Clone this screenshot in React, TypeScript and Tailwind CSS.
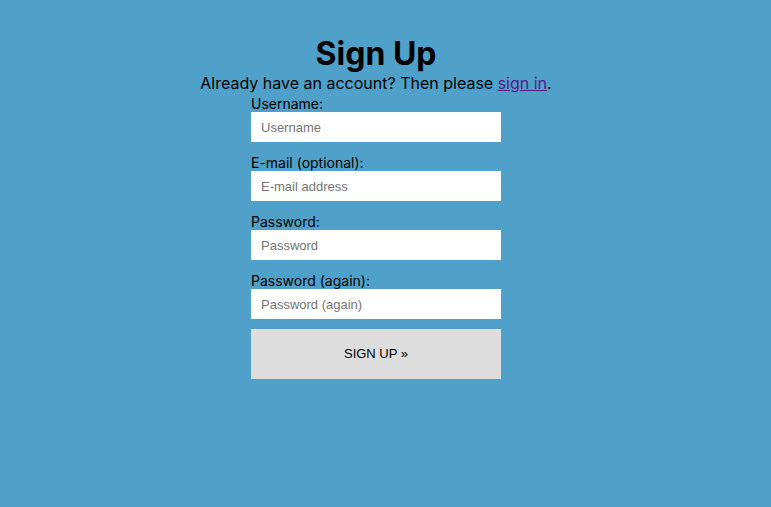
import React from 'react';

const fields = [
  { label: 'Username:', placeholder: 'Username', type: 'text' },
  { label: 'E-mail (optional):', placeholder: 'E-mail address', type: 'email' },
  { label: 'Password:', placeholder: 'Password', type: 'password' },
  { label: 'Password (again):', placeholder: 'Password (again)', type: 'password' },
];

export default function App() {
  return (
    <div className="min-h-[507px] w-full bg-[#4fa1ca] font-['Inter',sans-serif] text-black">
      <div className="w-[752px] pt-[35px]">
        <h1 className="text-center text-[32px] font-bold leading-[38px]">Sign Up</h1>
        <p className="mt-[1px] text-center text-base leading-[19px]">
          Already have an account? Then please{' '}
          <a href="#" className="text-[#551a8b] underline">sign in</a>.
        </p>
        <form className="mx-auto mt-[2px] flex w-[250px] flex-col" onSubmit={e => e.preventDefault()}>
          {fields.map((f, i) => (
            <label key={f.label} className={`flex flex-col ${i > 0 ? 'mt-3' : ''}`}>
              <span className="text-sm leading-[17px]">{f.label}</span>
              <input
                type={f.type}
                placeholder={f.placeholder}
                className="h-[30px] w-full bg-white pl-[10px] font-['Liberation_Sans',Arial,sans-serif] text-[13px] outline-none placeholder:text-[#757575]"
              />
            </label>
          ))}
          <button
            type="submit"
            className="mt-[10px] h-[50px] w-full bg-[#dddddd] font-['Liberation_Sans',Arial,sans-serif] text-[13px] text-black"
          >
            SIGN UP »
          </button>
        </form>
      </div>
    </div>
  );
}
